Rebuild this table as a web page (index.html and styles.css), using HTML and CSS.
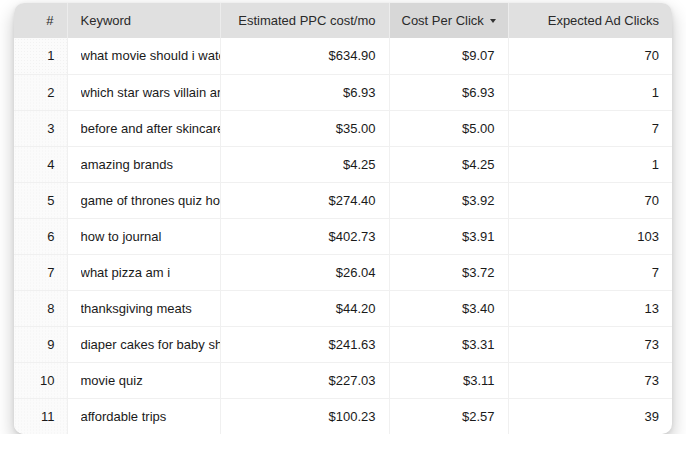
FILE: index.html
```html
<!DOCTYPE html>
<html>
<head>
<meta charset="utf-8">
<link rel="stylesheet" href="styles.css">
</head>
<body>
<div class="card">
<table class="grid">
<colgroup>
<col class="c-num"><col class="c-kw"><col class="c-est"><col class="c-cpc"><col class="c-clk">
</colgroup>
<thead>
<tr>
<th class="num">#</th>
<th class="left">Keyword</th>
<th>Estimated PPC cost/mo</th>
<th class="sorted">Cost Per Click <span class="caret"></span></th>
<th>Expected Ad Clicks</th>
</tr>
</thead>
<tbody>
<tr><td class="num">1</td><td class="kw"><div class="clip">what movie should i watch</div></td><td>$634.90</td><td>$9.07</td><td>70</td></tr>
<tr><td class="num">2</td><td class="kw"><div class="clip">which star wars villain are you</div></td><td>$6.93</td><td>$6.93</td><td>1</td></tr>
<tr><td class="num">3</td><td class="kw"><div class="clip">before and after skincare</div></td><td>$35.00</td><td>$5.00</td><td>7</td></tr>
<tr><td class="num">4</td><td class="kw"><div class="clip">amazing brands</div></td><td>$4.25</td><td>$4.25</td><td>1</td></tr>
<tr><td class="num">5</td><td class="kw"><div class="clip">game of thrones quiz house</div></td><td>$274.40</td><td>$3.92</td><td>70</td></tr>
<tr><td class="num">6</td><td class="kw"><div class="clip">how to journal</div></td><td>$402.73</td><td>$3.91</td><td>103</td></tr>
<tr><td class="num">7</td><td class="kw"><div class="clip">what pizza am i</div></td><td>$26.04</td><td>$3.72</td><td>7</td></tr>
<tr><td class="num">8</td><td class="kw"><div class="clip">thanksgiving meats</div></td><td>$44.20</td><td>$3.40</td><td>13</td></tr>
<tr><td class="num">9</td><td class="kw"><div class="clip">diaper cakes for baby shower</div></td><td>$241.63</td><td>$3.31</td><td>73</td></tr>
<tr><td class="num">10</td><td class="kw"><div class="clip">movie quiz</div></td><td>$227.03</td><td>$3.11</td><td>73</td></tr>
<tr><td class="num">11</td><td class="kw"><div class="clip">affordable trips</div></td><td>$100.23</td><td>$2.57</td><td>39</td></tr>
</tbody>
</table>
</div>
</body>
</html>
```
FILE: styles.css
```css
html, body {
  margin: 0;
  padding: 0;
  background: #ffffff;
}
body {
  padding: 3px 14px 0 14px;
  font-family: "Liberation Sans", Arial, sans-serif;
  font-size: 13px;
  color: #1a1a1a;
}
.card {
  width: 658px;
  border-radius: 10px;
  overflow: hidden;
  background: #ffffff;
  box-shadow: 0 8px 18px rgba(0, 0, 0, 0.24), 0 1px 4px rgba(0, 0, 0, 0.08);
}
.grid {
  width: 658px;
  border-collapse: collapse;
  table-layout: fixed;
}
.c-num { width: 53px; }
.c-kw { width: 153px; }
.c-est { width: 169px; }
.c-cpc { width: 119px; }
.c-clk { width: 164px; }
th, td {
  height: 36px;
  padding: 0 13px 0 12px;
  text-align: right;
  white-space: nowrap;
  box-sizing: border-box;
}
th {
  background: #e0e0e0;
  font-weight: normal;
  color: #2a2a2a;
  height: 35px;
  border-left: 1px solid #ececec;
}
th:first-child { border-left: none; }
th.sorted { background: #d7d7d7; padding-right: 12px; }
th.left { text-align: left; padding-left: 13px; }
.caret {
  display: inline-block;
  width: 0;
  height: 0;
  border-left: 3px solid transparent;
  border-right: 3px solid transparent;
  border-top: 4px solid #333333;
  vertical-align: middle;
  margin-left: 3px;
  margin-bottom: 2px;
}
td {
  border-top: 1px solid #f0f0f0;
  border-left: 1px solid #f0f0f0;
}
tbody tr:first-child td { border-top: none; }
td:first-child { border-left: none; }
td.num {
  background-color: #fbfbfb;
  background-image: radial-gradient(#f2f2f2 0.6px, transparent 0.7px);
  background-size: 3px 3px;
  padding-right: 12px;
}
td.kw {
  text-align: left;
  padding: 0 0 0 13px;
}
.clip {
  overflow: hidden;
  white-space: nowrap;
}
```
